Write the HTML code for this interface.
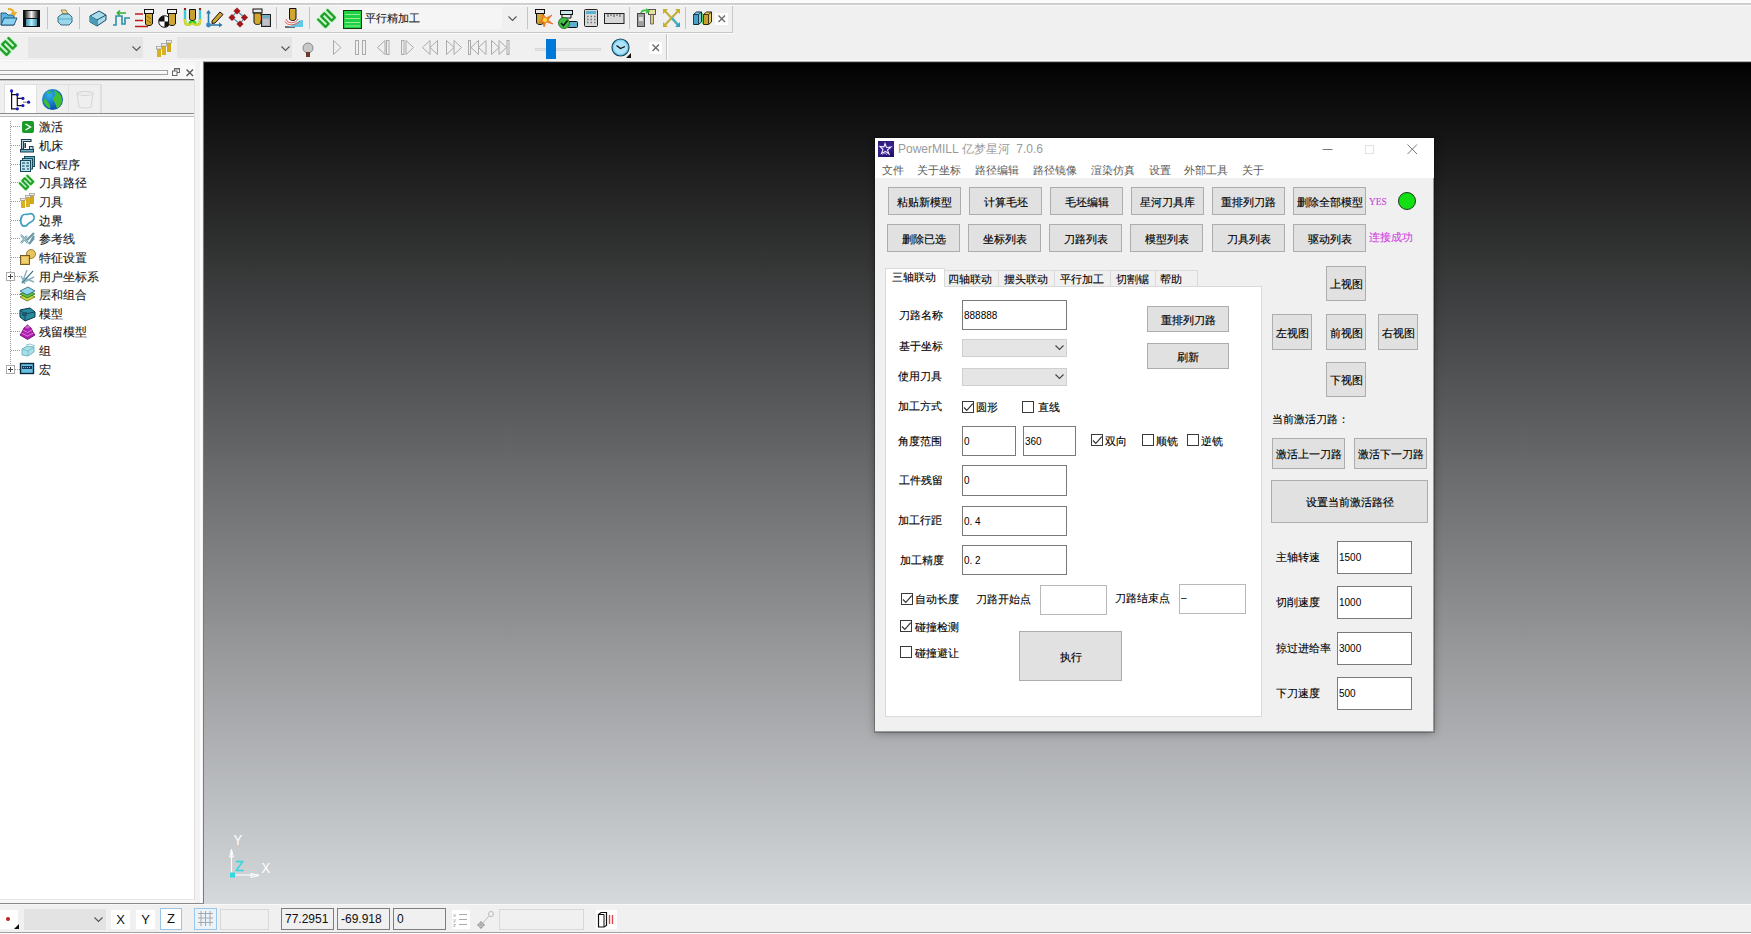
<!DOCTYPE html>
<html><head><meta charset="utf-8">
<style>
*{box-sizing:border-box}
html,body{margin:0;padding:0}
body{width:1751px;height:934px;position:relative;overflow:hidden;background:#f0f0f0;font-family:"Liberation Sans",sans-serif;font-size:12px;color:#000}
.a{position:absolute}
.sep{position:absolute;width:1px;background:#c4c4c4}
.btn{position:absolute;background:#e1e1e1;border:1px solid #adadad;text-align:center;font-size:11.2px;color:#000;display:flex;align-items:center;justify-content:center;white-space:nowrap;padding-top:2px;-webkit-text-stroke:0.15px #000}
.tb{position:absolute;background:#fff;border:1px solid #7a7a7a;font-size:10px;padding-left:1px;display:flex;align-items:center}
.lbl{position:absolute;font-size:11.2px;white-space:nowrap;line-height:14px;-webkit-text-stroke:0.12px currentColor}
.cb{position:absolute;width:12px;height:12px;border:1px solid #3a3a3a;background:#fff}
.cmb{position:absolute;background:#e5e5e5;border:1px solid #cfcfcf}
svg{position:absolute;overflow:visible}
</style></head><body>

<!-- top strip -->
<div class="a" style="left:0;top:0;width:1751px;height:3px;background:#fbfbfb"></div>
<div class="a" style="left:0;top:3px;width:1751px;height:2px;background:#cfcfcf"></div>
<div class="a" style="left:0;top:32px;width:733px;height:1px;background:#c8c8c8"></div>
<div class="a" style="left:0;top:33px;width:734px;height:1px;background:#fafafa"></div><div class="a" style="left:0;top:5px;width:1751px;height:1px;background:#fbfbfb"></div>
<div class="a" style="left:732px;top:6px;width:1px;height:27px;background:#c8c8c8"></div>
<div class="a" style="left:666px;top:34px;width:1px;height:27px;background:#c4c4c4"></div><div class="a" style="left:667px;top:34px;width:1px;height:27px;background:#fdfdfd"></div>
<div class="a" style="left:0;top:60px;width:1751px;height:1px;background:#fafafa"></div><div class="a" style="left:203px;top:61px;width:1548px;height:1px;background:#b0b0b0"></div>


<!-- toolbar row 1 -->
<div class="sep" style="left:47px;top:7px;height:22px"></div>
<div class="sep" style="left:79px;top:7px;height:22px"></div>
<div class="sep" style="left:276px;top:7px;height:22px"></div>
<div class="sep" style="left:309px;top:7px;height:22px"></div>
<div class="sep" style="left:527px;top:7px;height:22px"></div>
<div class="sep" style="left:629px;top:7px;height:22px"></div>
<div class="sep" style="left:685px;top:7px;height:22px"></div>
<!-- open -->
<svg style="left:0px;top:8px" width="18" height="19"><path d="M1 5 H6 L8 7 H14 V17 H1Z" fill="#5ab4e0" stroke="#1a4a70" stroke-width="0.9"/><path d="M1 17 L4 10 H17 L14 17Z" fill="#8ad0f0" stroke="#1a4a70" stroke-width="0.9"/><path d="M8 1 C12 1 14 3 14 6 M11.5 4.5 L14 7 L16.5 4" fill="none" stroke="#e8b020" stroke-width="1.8"/></svg>
<!-- save -->
<svg style="left:23px;top:10px" width="17" height="17"><defs><linearGradient id="sg1" x1="0" x2="1"><stop offset="0" stop-color="#222"/><stop offset="0.5" stop-color="#f4f4f4"/><stop offset="1" stop-color="#222"/></linearGradient><linearGradient id="sg2" x1="0" x2="1"><stop offset="0" stop-color="#3a90b0"/><stop offset="0.5" stop-color="#b8ecfa"/><stop offset="1" stop-color="#3a90b0"/></linearGradient></defs><rect x="0" y="0" width="17" height="17" fill="#111"/><rect x="2" y="1" width="13" height="7" fill="url(#sg1)"/><rect x="3" y="9" width="11" height="7" fill="url(#sg2)"/></svg>
<!-- print -->
<svg style="left:56px;top:9px" width="18" height="18"><path d="M5 1 H10 L12 5 H7Z" fill="#e8d890" stroke="#7a6a30" stroke-width="0.7"/><path d="M2 8 L6 5 H13 L16 8 V13 L13 16 H5 L2 13Z" fill="#9ad8ec" stroke="#2a5a70" stroke-width="0.9"/><path d="M3 10 H15" stroke="#5aa8c8"/></svg>
<!-- box -->
<svg style="left:89px;top:10px" width="18" height="17"><path d="M1 6 L10 1 L17 5 L17 10 L8 16 L1 12Z" fill="#a8dcec" stroke="#1a4a60" stroke-width="1"/><path d="M1 6 L8 10 L17 5 M8 10 V16" fill="none" stroke="#1a4a60" stroke-width="1"/><path d="M1 6 L8 10 V16 L1 12Z" fill="#4a9ab8"/></svg>
<!-- step path -->
<svg style="left:112px;top:9px" width="19" height="17"><path d="M1 16 H4 V7 H10 V15 H13 V9 H18" fill="none" stroke="#2a90b0" stroke-width="1.6"/><path d="M5 4 H14 M5 4 L8 1.5 M5 4 L8 6.5" fill="none" stroke="#30b030" stroke-width="1.6"/></svg>
<!-- red lines + tool -->
<svg style="left:135px;top:8px" width="20" height="20"><path d="M0 6 H8 M0 12.5 H8 M0 18.5 H13" stroke="#c01818" stroke-width="1.5"/><rect x="9.5" y="1.5" width="9" height="4" fill="#f0f0f0" stroke="#111" stroke-width="1"/><path d="M10.5 5.5 H17.5 V15 C17.5 17 15.5 17.5 14 17.5 C12 17.5 10.5 17 10.5 15Z" fill="#d0a830" stroke="#111" stroke-width="1"/><path d="M12 8 L16 11 M12 12 L16 15" stroke="#8a6a10"/></svg>
<!-- disc + tool -->
<svg style="left:158px;top:8px" width="20" height="20"><circle cx="6.5" cy="13.5" r="5.8" fill="#fff" stroke="#111" stroke-width="1"/><path d="M6.5 13.5 V7.7 A5.8 5.8 0 0 0 0.7 13.5Z M6.5 13.5 V19.3 A5.8 5.8 0 0 0 12.3 13.5Z" fill="#111"/><rect x="9.5" y="1.5" width="9" height="4" fill="#f0f0f0" stroke="#111" stroke-width="1"/><path d="M10.5 5.5 H17.5 V15 C17.5 17 15.5 17.5 14 17.5 C12 17.5 10.5 17 10.5 15Z" fill="#d0a830" stroke="#111" stroke-width="1"/></svg>
<!-- U tool -->
<svg style="left:183px;top:8px" width="19" height="20"><path d="M2 1 V13 C2 17 5 18 9.5 15 C14 18 17 17 17 13 V1" fill="none" stroke="#40c8d8" stroke-width="2.4"/><path d="M2 11 V13 C2 17 5 18 9.5 15 C14 18 17 17 17 13 V11" fill="none" stroke="#d8d820" stroke-width="2.4"/><path d="M6 15 L9.5 12.5 L13 15" fill="none" stroke="#30d030" stroke-width="2.4"/><path d="M6.5 1.5 H12.5 V10 C12.5 12 11 12.5 9.5 12.5 C8 12.5 6.5 12 6.5 10Z" fill="#c8a030" stroke="#111" stroke-width="1"/><rect x="1" y="0" width="2" height="2" fill="#a01818"/><rect x="16" y="0" width="2" height="2" fill="#a01818"/></svg>
<!-- axis pencil -->
<svg style="left:205px;top:8px" width="20" height="20"><path d="M3.5 17 V3 M3.5 17 H16" stroke="#2a7aa8" stroke-width="1.6"/><path d="M1 5.5 L3.5 2 L6 5.5Z M14 14.5 L17.5 17 L14 19.5Z" fill="#2a7aa8"/><circle cx="3.5" cy="17" r="2.4" fill="#3a8ab8"/><path d="M7 13 L15 4 L18 6.5 L10 15 L7 15.5Z" fill="#d0a830" stroke="#111" stroke-width="1"/></svg>
<!-- diamond -->
<svg style="left:229px;top:8px" width="19" height="19"><path d="M8 3 L15.5 9.5 L11 16 L3 9.5Z" fill="none" stroke="#4a90b0" stroke-width="1.2"/><rect x="5.5" y="0.5" width="5" height="5" transform="rotate(45 8 3)" fill="#a01818"/><rect x="13" y="7" width="5" height="5" transform="rotate(45 15.5 9.5)" fill="#a01818"/><rect x="8.5" y="13.5" width="5" height="5" transform="rotate(45 11 16)" fill="#a01818"/><rect x="0.5" y="7" width="5" height="5" transform="rotate(45 3 9.5)" fill="#a01818"/></svg>
<!-- tool + bin -->
<svg style="left:252px;top:8px" width="20" height="20"><rect x="1" y="1" width="9" height="4" fill="#e8e8e8" stroke="#111" stroke-width="1"/><path d="M2 5 H9 V14 C9 16 7 16.5 5.5 16.5 C4 16.5 2 16 2 14Z" fill="#d0a830" stroke="#111" stroke-width="1"/><path d="M8 7 L11 9 L8 13Z" fill="#f08020"/><rect x="9.5" y="6.5" width="9" height="12" fill="#a0a8b0" stroke="#222" stroke-width="1"/><rect x="10.5" y="7.5" width="7" height="2" fill="#5ab0d0"/><path d="M12 11 V17 M14 11 V17 M16 11 V17" stroke="#ddd"/></svg>
<!-- tool red arc -->
<svg style="left:284px;top:8px" width="20" height="20"><path d="M1 19 H11" stroke="#111" stroke-width="1.2"/><path d="M1 19 C10 19 13 12 19 12 V19Z" fill="#60c8e0"/><path d="M2 11 C3 16 12 16 14 11 M1 13.5 C3 18 12 18 16 13" fill="none" stroke="#e06060" stroke-width="1"/><path d="M5.5 0.5 H12 V10 C12 12 10.5 12.5 8.75 12.5 C7 12.5 5.5 12 5.5 10Z" fill="#d0a830" stroke="#111" stroke-width="1"/></svg>
<!-- green zigzag -->
<svg style="left:312px;top:4px" width="30" height="28"><g transform="translate(14.5,14.5) rotate(45)"><path d="M-5.2 6.6 H5.2 V2.2 H-5.2 V-2.2 H5.2 V-6.6 H-5.2" fill="none" stroke="#c8f4c8" stroke-width="4.2" stroke-linejoin="round" stroke-linecap="round"/><path d="M-5.2 6.6 H5.2 V2.2 H-5.2 V-2.2 H5.2 V-6.6 H-5.2" fill="none" stroke="#1ea02a" stroke-width="2.3" stroke-linejoin="round" stroke-linecap="round"/></g></svg>
<!-- combo -->
<div class="a" style="left:340px;top:7px;width:162px;height:22px;background:#f5f5f5"></div>
<svg style="left:343px;top:10px" width="19" height="19"><rect x="0.5" y="0.5" width="18" height="18" fill="#20d040" stroke="#103a10" stroke-width="1"/><path d="M2 4.5 H17 M2 8.5 H17 M2 12.5 H17 M2 16 H17" stroke="#90f0a0" stroke-width="1"/></svg>
<div class="lbl" style="left:365px;top:11px;font-size:11px;color:#222">平行精加工</div>
<svg style="left:508px;top:16px" width="10" height="6"><path d="M0.5 0.5 L4.5 4.5 L8.5 0.5" fill="none" stroke="#555" stroke-width="1.1"/></svg>
<!-- explosion tool -->
<svg style="left:534px;top:8px" width="20" height="20"><rect x="1.5" y="1.5" width="9" height="4" fill="#e8e8e8" stroke="#111" stroke-width="1"/><path d="M2.5 5.5 H9.5 V14 C9.5 16 8 16.5 6 16.5 C4 16.5 2.5 16 2.5 14Z" fill="#d0a830" stroke="#111" stroke-width="1"/><path d="M9 6 L12 10 L18 7 L14 12 L19 16 L12 14 L10 19 L9 14 L5 15 L8 11Z" fill="#f09020" stroke="#e05010" stroke-width="0.6"/><circle cx="11" cy="12" r="2" fill="#ffe040"/></svg>
<!-- check tool -->
<svg style="left:558px;top:9px" width="20" height="20"><rect x="2.5" y="1.5" width="12" height="4" fill="#c8e4ec" stroke="#111" stroke-width="1"/><path d="M4 5.5 H13 V9 H4Z" fill="#eee" stroke="#111" stroke-width="1"/><rect x="9.5" y="12.5" width="10" height="6" rx="1" fill="#5ab0d0" stroke="#111" stroke-width="1"/><circle cx="6" cy="14" r="5.5" fill="#40c040" stroke="#1a5a1a" stroke-width="0.8"/><path d="M3 14 L5.5 16.5 L9.5 11.5" fill="none" stroke="#111" stroke-width="1.6"/></svg>
<!-- calculator -->
<svg style="left:584px;top:9px" width="14" height="18"><rect x="0.5" y="0.5" width="13" height="17" rx="1" fill="#d8d8d8" stroke="#222" stroke-width="1"/><rect x="2" y="2" width="10" height="3" fill="#5ab0d0"/><path d="M3 7.5 H4.5 M6.5 7.5 H8 M10 7.5 H11.5 M3 10.5 H4.5 M6.5 10.5 H8 M10 10.5 H11.5 M3 13.5 H4.5 M6.5 13.5 H8 M10 13.5 H11.5" stroke="#777" stroke-width="1.6"/></svg>
<!-- ruler -->
<svg style="left:604px;top:13px" width="21" height="12"><rect x="0.5" y="0.5" width="19.5" height="10" fill="#d8d8d8" stroke="#222" stroke-width="1"/><path d="M4 1 V4 M7 1 V3 M10 1 V4 M13 1 V3 M16 1 V4" stroke="#555"/></svg>
<!-- tools w arrow -->
<svg style="left:637px;top:8px" width="20" height="20"><rect x="0.5" y="5.5" width="7" height="13" fill="#a0a0a0" stroke="#444" stroke-width="1"/><rect x="2" y="9" width="4" height="4" fill="#ddd"/><rect x="11.5" y="1.5" width="7" height="5" fill="#e8e0a0" stroke="#555" stroke-width="1"/><path d="M13.5 6.5 H16.5 V16 H13.5Z" fill="#d8c880" stroke="#555" stroke-width="0.8"/><path d="M4 5 C5 2 8 2 11 3 M9 1 L12 3 L9 5" fill="none" stroke="#40c040" stroke-width="1.6"/></svg>
<!-- cross arrows -->
<svg style="left:662px;top:8px" width="19" height="20"><path d="M2 2 L17 18 M17 2 L2 18" stroke="#c0b040" stroke-width="2.2"/><path d="M10 10 L17 18" stroke="#40b0d0" stroke-width="2.2"/><path d="M1 1 H6 L1 6Z M18 1 H13 L18 6Z M1 19 H6 L1 14Z" fill="#c8b020"/><path d="M18 19 H13 L18 14Z" fill="#30a0c8"/></svg>
<!-- boxes -->
<svg style="left:693px;top:11px" width="20" height="15"><path d="M0.5 3.5 L3.5 1 H8.5 V11 L5.5 13.5 H0.5Z" fill="#7cc8e8" stroke="#10303a" stroke-width="1"/><path d="M0.5 3.5 H5.5 V13.5 M5.5 3.5 L8.5 1" fill="none" stroke="#10303a" stroke-width="0.9"/><path d="M0.8 4 H5 V13 H0.8Z" fill="#4aa0c8"/><path d="M10.5 3.5 L13.5 1 H18.5 V11 L15.5 13.5 H10.5Z" fill="#e8c850" stroke="#302810" stroke-width="1"/><path d="M10.5 3.5 H15.5 V13.5 M15.5 3.5 L18.5 1" fill="none" stroke="#302810" stroke-width="0.9"/><path d="M10.8 4 H15 V13 H10.8Z" fill="#c8a030"/><path d="M9.5 2 V13" stroke="#40c040" stroke-width="0.8"/></svg>
<div class="a" style="left:715px;top:13px;width:13px;height:12px;background:#fff"></div>
<svg style="left:718px;top:15px" width="8" height="8"><path d="M0.5 0.5 L7 7 M7 0.5 L0.5 7" stroke="#6a6a6a" stroke-width="1.4"/></svg>

<!-- toolbar row 2 -->
<svg style="left:0px;top:33px" width="22" height="26"><g transform="translate(7.5,13.5) rotate(45)"><path d="M-5.2 6.6 H5.2 V2.2 H-5.2 V-2.2 H5.2 V-6.6 H-5.2" fill="none" stroke="#c8f4c8" stroke-width="4.2" stroke-linejoin="round" stroke-linecap="round"/><path d="M-5.2 6.6 H5.2 V2.2 H-5.2 V-2.2 H5.2 V-6.6 H-5.2" fill="none" stroke="#1ea02a" stroke-width="2.3" stroke-linejoin="round" stroke-linecap="round"/></g></svg>
<div class="cmb" style="left:28px;top:37px;width:115px;height:21px;border:none"></div>
<svg style="left:132px;top:46px" width="10" height="6"><path d="M0.5 0.5 L4.5 4.5 L8.5 0.5" fill="none" stroke="#555" stroke-width="1.1"/></svg>
<svg style="left:155px;top:39px" width="19" height="19"><rect x="2" y="10" width="4" height="8" fill="#d8b020"/><rect x="7" y="7" width="4" height="9" fill="#d8b020"/><rect x="12" y="4" width="4" height="9" fill="#d0a818"/><rect x="1.5" y="7.5" width="5" height="2.5" fill="#f0f0f0" stroke="#888" stroke-width="0.6"/><rect x="6.5" y="4.5" width="5" height="2.5" fill="#f0f0f0" stroke="#888" stroke-width="0.6"/><rect x="11.5" y="1.5" width="5" height="2.5" fill="#f0f0f0" stroke="#888" stroke-width="0.6"/></svg>
<div class="cmb" style="left:177px;top:37px;width:115px;height:21px;border:none"></div>
<svg style="left:281px;top:46px" width="10" height="6"><path d="M0.5 0.5 L4.5 4.5 L8.5 0.5" fill="none" stroke="#555" stroke-width="1.1"/></svg>
<svg style="left:302px;top:42px" width="12" height="16"><circle cx="6" cy="6" r="5" fill="#c8c8c8" stroke="#777" stroke-width="0.8"/><rect x="4" y="10" width="4" height="5" fill="#6a3a2a"/></svg>
<svg style="left:333px;top:40px" width="9" height="15"><path d="M0.5 0.5 L8 7.5 L0.5 14.5Z" fill="none" stroke="#aaa" stroke-width="1"/></svg>
<svg style="left:355px;top:40px" width="12" height="15"><rect x="0.5" y="0.5" width="3" height="14" fill="none" stroke="#aaa"/><rect x="7.5" y="0.5" width="3" height="14" fill="none" stroke="#aaa"/></svg>
<svg style="left:377px;top:40px" width="13" height="15"><path d="M8 0.5 L0.5 7.5 L8 14.5Z" fill="none" stroke="#aaa"/><rect x="9.5" y="0.5" width="2.5" height="14" fill="none" stroke="#aaa"/></svg>
<svg style="left:401px;top:40px" width="14" height="15"><rect x="0.5" y="0.5" width="2.5" height="14" fill="none" stroke="#aaa"/><path d="M5 0.5 L12.5 7.5 L5 14.5Z" fill="none" stroke="#aaa"/></svg>
<svg style="left:422px;top:40px" width="17" height="15"><path d="M8 0.5 L0.5 7.5 L8 14.5Z M15.5 0.5 L8 7.5 L15.5 14.5Z" fill="none" stroke="#aaa"/></svg>
<svg style="left:446px;top:40px" width="17" height="15"><path d="M0.5 0.5 L8 7.5 L0.5 14.5Z M8 0.5 L15.5 7.5 L8 14.5Z" fill="none" stroke="#aaa"/></svg>
<svg style="left:468px;top:40px" width="19" height="15"><rect x="0.5" y="0.5" width="2" height="14" fill="none" stroke="#aaa"/><path d="M10.5 0.5 L3 7.5 L10.5 14.5Z M18 0.5 L10.5 7.5 L18 14.5Z" fill="none" stroke="#aaa"/></svg>
<svg style="left:491px;top:40px" width="19" height="15"><path d="M0.5 0.5 L8 7.5 L0.5 14.5Z M8 0.5 L15.5 7.5 L8 14.5Z" fill="none" stroke="#aaa"/><rect x="16" y="0.5" width="2" height="14" fill="none" stroke="#aaa"/></svg>
<div class="a" style="left:535px;top:48px;width:66px;height:3px;background:#e4e4e4;border:1px solid #d8d8d8"></div>
<div class="a" style="left:546px;top:39px;width:10px;height:20px;background:#0078d7"></div>
<svg style="left:611px;top:38px" width="21" height="21"><circle cx="9.5" cy="9.5" r="8.5" fill="#7ad0f0" stroke="#1a4a60" stroke-width="1.2"/><circle cx="9.5" cy="9.5" r="6.5" fill="#b0e4f8"/><path d="M5.5 7.5 L9.5 10.5 L14 8.5" fill="none" stroke="#111" stroke-width="1.3"/><path d="M15 20 L20 15 V20Z" fill="#111"/></svg>
<div class="a" style="left:649px;top:42px;width:13px;height:12px;background:#fff"></div>
<svg style="left:652px;top:44px" width="8" height="8"><path d="M0.5 0.5 L7 7 M7 0.5 L0.5 7" stroke="#6a6a6a" stroke-width="1.4"/></svg>

<!-- viewport -->
<div class="a" style="left:203px;top:62px;width:1548px;height:842px;background:linear-gradient(#3a3a3a 0px,#000 1px,#050505 12px,#d6d9dc 842px)"></div>
<div class="a" style="left:203px;top:62px;width:1px;height:842px;background:#7a7a7a"></div>

<!-- left panel -->
<div class="a" style="left:0;top:62px;width:203px;height:842px;background:#f7f7f7"></div>
<div class="a" style="left:195px;top:62px;width:8px;height:842px;background:#f2f2f2"></div><div class="a" style="left:200px;top:62px;width:2px;height:842px;background:#fbfbfb"></div>
<div class="a" style="left:0;top:70px;width:168px;height:1px;background:#a0a0a0"></div><div class="a" style="left:0;top:71px;width:168px;height:1px;background:#fdfdfd"></div>
<div class="a" style="left:0;top:74px;width:168px;height:1px;background:#a0a0a0"></div><div class="a" style="left:167px;top:70px;width:1px;height:5px;background:#a0a0a0"></div>
<div class="a" style="left:0;top:79px;width:195px;height:1px;background:#6e6e6e"></div><div class="a" style="left:0;top:80px;width:195px;height:1px;background:#c8c8c8"></div>
<div class="a" style="left:0;top:81px;width:195px;height:32px;background:#efefef"></div>
<div class="a" style="left:0;top:113px;width:195px;height:1px;background:#8a8a8a"></div>
<div class="a" style="left:0;top:114px;width:195px;height:2px;background:#f4f4f4"></div>
<div class="a" style="left:0;top:116px;width:195px;height:1px;background:#bdbdbd"></div>
<div class="a" style="left:0;top:117px;width:194px;height:783px;background:#fff;border-bottom:1px solid #e6e6e6"></div>
<div class="a" style="left:194px;top:79px;width:1px;height:821px;background:#e0e0e0"></div>


<!-- left panel header buttons -->
<div class="a" style="left:170px;top:66px;width:11px;height:11px;background:#fafafa"></div>
<svg style="left:172px;top:68px" width="8" height="8"><rect x="2.5" y="0.5" width="5" height="4" fill="none" stroke="#666"/><rect x="2.5" y="0" width="5" height="1.5" fill="#666"/><rect x="0.5" y="3" width="4.5" height="4.5" fill="#fafafa" stroke="#666"/></svg>
<div class="a" style="left:183px;top:66px;width:12px;height:12px;background:#fafafa"></div>
<svg style="left:186px;top:69px" width="8" height="8"><path d="M0.5 0.5 L7 7 M7 0.5 L0.5 7" stroke="#555" stroke-width="1.4"/></svg>
<!-- tabs -->
<div class="a" style="left:4px;top:84px;width:98px;height:29px;border:1px solid #dedede;border-bottom:none"></div><div class="a" style="left:5px;top:85px;width:31px;height:28px;background:#fdfdfd"></div>
<div class="a" style="left:36px;top:85px;width:1px;height:28px;background:#e0e0e0"></div>
<div class="a" style="left:68px;top:85px;width:1px;height:28px;background:#e0e0e0"></div>
<div class="a" style="left:100px;top:85px;width:1px;height:28px;background:#e0e0e0"></div>
<svg style="left:0px;top:78px" width="36" height="36"><path d="M11.6 13 V30.8 H17.3 M11.6 16.6 H17.3 V27.6 H22.9 M17.3 20.4 H22.9" fill="none" stroke="#111" stroke-width="1.2"/><path d="M22.9 24.2 H28.6" stroke="#777" stroke-width="1"/><circle cx="11.6" cy="12.9" r="1.6" fill="#1a1ab8"/><circle cx="17.3" cy="16.6" r="1.6" fill="#1a1ab8"/><circle cx="22.9" cy="20.4" r="1.6" fill="#1a1ab8"/><circle cx="28.6" cy="24.2" r="1.6" fill="#1a1ab8"/><circle cx="22.9" cy="27.6" r="1.6" fill="#1a1ab8"/><circle cx="17.3" cy="30.8" r="1.6" fill="#1a1ab8"/></svg>
<div class="a" style="left:42px;top:89px;width:21px;height:21px;border-radius:50%;background:radial-gradient(circle at 35% 30%,#30b0e8,#0a5ab8 65%,#083a88)"></div><svg style="left:42px;top:89px" width="21" height="21"><path d="M12 1.5 C16 2 20 6 20 11 C20 15 18 18 15 19.5 C14 17 13 14 12 12 C10 11 11 8 13 7 C14 5 12 3 12 1.5Z" fill="#40c030"/><path d="M2 9 C3 11 5 11 6 13 C7 15 9 16 8 19.5 C5 18.5 2 15 1.5 11Z" fill="#40c030"/><path d="M4 3.5 C6 2 8 2 9 3 C8 5 6 5 4 3.5Z" fill="#40c030"/></svg>
<svg style="left:75px;top:90px" width="20" height="20"><path d="M2 3 Q10 0 18 3 L16 17 Q10 19 4 17Z" fill="none" stroke="#d8d8d8" stroke-width="1.2"/><ellipse cx="10" cy="3.5" rx="8" ry="2" fill="none" stroke="#d8d8d8"/></svg>
<!-- tree lines -->
<div class="a" style="left:10px;top:121px;width:0;height:249px;border-left:1px dotted #999"></div>
<div class="a" style="left:11px;top:126px;width:9px;height:0;border-top:1px dotted #999"></div>
<div class="lbl" style="left:39px;top:120px;color:#1a1a1a;font-size:11.5px">激活</div>
<div class="a" style="left:11px;top:145px;width:9px;height:0;border-top:1px dotted #999"></div>
<div class="lbl" style="left:39px;top:139px;color:#1a1a1a;font-size:11.5px">机床</div>
<div class="a" style="left:11px;top:164px;width:9px;height:0;border-top:1px dotted #999"></div>
<div class="lbl" style="left:39px;top:158px;color:#1a1a1a;font-size:11.5px">NC程序</div>
<div class="a" style="left:11px;top:182px;width:9px;height:0;border-top:1px dotted #999"></div>
<div class="lbl" style="left:39px;top:176px;color:#1a1a1a;font-size:11.5px">刀具路径</div>
<div class="a" style="left:11px;top:201px;width:9px;height:0;border-top:1px dotted #999"></div>
<div class="lbl" style="left:39px;top:195px;color:#1a1a1a;font-size:11.5px">刀具</div>
<div class="a" style="left:11px;top:220px;width:9px;height:0;border-top:1px dotted #999"></div>
<div class="lbl" style="left:39px;top:214px;color:#1a1a1a;font-size:11.5px">边界</div>
<div class="a" style="left:11px;top:238px;width:9px;height:0;border-top:1px dotted #999"></div>
<div class="lbl" style="left:39px;top:232px;color:#1a1a1a;font-size:11.5px">参考线</div>
<div class="a" style="left:11px;top:257px;width:9px;height:0;border-top:1px dotted #999"></div>
<div class="lbl" style="left:39px;top:251px;color:#1a1a1a;font-size:11.5px">特征设置</div>
<div class="a" style="left:11px;top:276px;width:9px;height:0;border-top:1px dotted #999"></div>
<div class="lbl" style="left:39px;top:270px;color:#1a1a1a;font-size:11.5px">用户坐标系</div>
<div class="a" style="left:11px;top:294px;width:9px;height:0;border-top:1px dotted #999"></div>
<div class="lbl" style="left:39px;top:288px;color:#1a1a1a;font-size:11.5px">层和组合</div>
<div class="a" style="left:11px;top:313px;width:9px;height:0;border-top:1px dotted #999"></div>
<div class="lbl" style="left:39px;top:307px;color:#1a1a1a;font-size:11.5px">模型</div>
<div class="a" style="left:11px;top:331px;width:9px;height:0;border-top:1px dotted #999"></div>
<div class="lbl" style="left:39px;top:325px;color:#1a1a1a;font-size:11.5px">残留模型</div>
<div class="a" style="left:11px;top:350px;width:9px;height:0;border-top:1px dotted #999"></div>
<div class="lbl" style="left:39px;top:344px;color:#1a1a1a;font-size:11.5px">组</div>
<div class="a" style="left:11px;top:369px;width:9px;height:0;border-top:1px dotted #999"></div>
<div class="lbl" style="left:39px;top:363px;color:#1a1a1a;font-size:11.5px">宏</div>
<div class="a" style="left:6px;top:272px;width:9px;height:9px;background:#fff;border:1px solid #aaa"></div>
<div class="a" style="left:8px;top:276px;width:5px;height:1px;background:#444"></div><div class="a" style="left:10px;top:274px;width:1px;height:5px;background:#444"></div>
<div class="a" style="left:6px;top:365px;width:9px;height:9px;background:#fff;border:1px solid #aaa"></div>
<div class="a" style="left:8px;top:369px;width:5px;height:1px;background:#444"></div><div class="a" style="left:10px;top:367px;width:1px;height:5px;background:#444"></div>


<!-- tree icons -->
<svg style="left:21px;top:120px" width="14" height="14"><rect x="1" y="1" width="12" height="12" rx="2" fill="#1a9a2a"/><path d="M4.5 4 L9.5 7 L4.5 10" fill="none" stroke="#fff" stroke-width="1.4"/></svg>
<svg style="left:20px;top:138px" width="15" height="15"><path d="M1.5 1.5 H11 V3.5 H3.5 V11 H1.5Z" fill="#bfe0ea" stroke="#1e3a48" stroke-width="1.1"/><rect x="4.5" y="5" width="1.5" height="5" fill="#1e3a48"/><rect x="9.5" y="8.5" width="3.5" height="3" fill="#bfe0ea" stroke="#1e3a48" stroke-width="1"/><rect x="0.5" y="11.5" width="13" height="2.5" fill="#6ab8d0" stroke="#1e3a48" stroke-width="1"/></svg>
<svg style="left:19px;top:155px" width="17" height="18"><rect x="5.5" y="1.5" width="10" height="10" fill="#6ab8d0" stroke="#1a4a5a" stroke-width="1"/><rect x="3.5" y="3.5" width="10" height="10.5" fill="#8ccfe2" stroke="#1a4a5a" stroke-width="1"/><rect x="1.5" y="5.5" width="10" height="11" fill="#b8e8f4" stroke="#1a4a5a" stroke-width="1"/><path d="M3 8 H6 M7.5 8 H10 M3 11 H5.5 M7 11 H10 M3 14 H6 M8 14 H10" stroke="#103040" stroke-width="1.2"/></svg>
<svg style="left:16px;top:172px" width="22" height="22"><g transform="translate(10.5,10.5) rotate(45) scale(0.8)"><path d="M-5.2 6.6 H5.2 V2.2 H-5.2 V-2.2 H5.2 V-6.6 H-5.2" fill="none" stroke="#c8f4c8" stroke-width="4.4" stroke-linejoin="round" stroke-linecap="round"/><path d="M-5.2 6.6 H5.2 V2.2 H-5.2 V-2.2 H5.2 V-6.6 H-5.2" fill="none" stroke="#1ea02a" stroke-width="2.5" stroke-linejoin="round" stroke-linecap="round"/></g></svg>
<svg style="left:19px;top:193px" width="17" height="16"><rect x="2" y="7" width="4" height="8" fill="#d8b020"/><rect x="7" y="4" width="4" height="10" fill="#d8b020"/><rect x="11" y="1" width="4" height="10" fill="#d0a818"/><rect x="1.5" y="5.5" width="5" height="2" fill="#eee" stroke="#888" stroke-width="0.6"/><rect x="6.5" y="2.5" width="5" height="2" fill="#eee" stroke="#888" stroke-width="0.6"/><rect x="10.5" y="0.5" width="5" height="2" fill="#eee" stroke="#888" stroke-width="0.6"/></svg>
<svg style="left:19px;top:212px" width="17" height="17"><path d="M3 4 C5 1 8 3 10 2 C13 1 16 3 15 7 C14 10 11 10 9 12 C7 15 3 15 2 11 C1 8 2 6 3 4Z" fill="#fff" stroke="#3aa0c0" stroke-width="1.7"/></svg>
<svg style="left:19px;top:231px" width="17" height="16"><path d="M2 4 L9 12 M2 12 L8 5 M8 9 L15 2 M10 13 L15 7 M12 10 L15 5" stroke="#6a9aa8" stroke-width="2.2"/><path d="M2 4 L9 12 M2 12 L8 5" stroke="#d0e4ea" stroke-width="0.8"/></svg>
<svg style="left:19px;top:248px" width="17" height="18"><circle cx="12" cy="6" r="4.5" fill="#e8c460" stroke="#8a6a20" stroke-width="0.8"/><rect x="1.5" y="7.5" width="9" height="9" fill="#e0b850" stroke="#6a5018" stroke-width="0.9"/><rect x="3" y="9" width="6" height="6" fill="#f0d070"/></svg>
<svg style="left:19px;top:268px" width="17" height="17"><path d="M3 15 L14 3 M3 15 L15 9 M3 15 L8 2 M5 10 L15 14 M2 8 L6 16" stroke="#8ab0c0" stroke-width="1.4"/><path d="M3 15 L14 3" stroke="#3a6a80" stroke-width="1"/></svg>
<svg style="left:19px;top:286px" width="17" height="16"><path d="M1 11 L8 15 L16 11 L9 7Z" fill="#d8d840" stroke="#5a6a20" stroke-width="0.8"/><path d="M1 8 L8 12 L16 8 L9 4Z" fill="#60c040" stroke="#2a6a20" stroke-width="0.8"/><path d="M1 5 L8 9 L16 5 L9 1Z" fill="#90d8f0" stroke="#2a5a70" stroke-width="0.8"/></svg>
<svg style="left:19px;top:306px" width="17" height="16"><path d="M1 4 L11 2 L16 6 L16 11 L6 15 L1 11Z" fill="#2a8aa0" stroke="#0a3a4a" stroke-width="1"/><path d="M1 4 L6 8 L16 6 M6 8 V15" fill="none" stroke="#0a3a4a" stroke-width="0.8"/><rect x="3" y="6" width="5" height="4" fill="#1a5a70"/></svg>
<svg style="left:19px;top:324px" width="17" height="17"><path d="M8.5 1 L12 4 L14 8 L16 11 L8.5 15.5 L1 11 L3 8 L5 4Z" fill="#b020b0" stroke="#600060" stroke-width="0.8"/><path d="M4 6 L8.5 8.5 L13 6 M2.5 9 L8.5 12 L14.5 9" fill="none" stroke="#e070e0" stroke-width="1"/><ellipse cx="8.5" cy="3" rx="2.5" ry="1.5" fill="#d060d0"/></svg>
<svg style="left:20px;top:343px" width="16" height="15"><path d="M2 6 L7 3 L14 4 L14 9 L8 13 L2 12Z" fill="#a8e0e8" stroke="#60a8b8" stroke-width="0.8"/><path d="M2 6 L8 8 L14 4 M8 8 V13" fill="none" stroke="#70b8c8" stroke-width="0.8"/><path d="M6 2 L10 1 L15 3" fill="none" stroke="#8ac8d8"/></svg>
<svg style="left:19px;top:362px" width="16" height="13"><rect x="1.5" y="1.5" width="13" height="10" fill="#6ac0e0" stroke="#0a2a40" stroke-width="1.4"/><rect x="3" y="4" width="10" height="3" fill="#1a3a60"/><path d="M4 5.5 H12" stroke="#9ad8f0" stroke-width="0.8" stroke-dasharray="1 1"/></svg>

<!-- status bar -->
<div class="a" style="left:0;top:904px;width:1751px;height:29px;background:#f0f0f0"></div>
<div class="a" style="left:0;top:932px;width:1751px;height:1px;background:#a0a0a0"></div>
<div class="a" style="left:0;top:933px;width:1751px;height:1px;background:#fff"></div>


<!-- status bar content -->
<div class="a" style="left:0;top:903px;width:204px;height:1px;background:#8a8a8a"></div><div class="a" style="left:0;top:904px;width:1751px;height:1px;background:#f8f8f8"></div>
<div class="a" style="left:0;top:910px;width:18px;height:19px;background:#fff"></div>
<div class="a" style="left:6px;top:917px;width:4px;height:4px;border-radius:50%;background:#c02020"></div>
<svg style="left:14px;top:924px" width="6" height="6"><path d="M5 0 V5 H0Z" fill="#111"/></svg>
<div class="cmb" style="left:24px;top:909px;width:82px;height:21px;border:none;background:#e3e3e3"></div>
<svg style="left:94px;top:917px" width="10" height="6"><path d="M0.5 0.5 L4.5 4.5 L8.5 0.5" fill="none" stroke="#555" stroke-width="1.1"/></svg>
<div class="a" style="left:111px;top:910px;width:19px;height:19px;background:#fff;font-size:13px;text-align:center;line-height:19px;color:#111">X</div>
<div class="a" style="left:136px;top:910px;width:19px;height:19px;background:#fff;font-size:13px;text-align:center;line-height:19px;color:#111">Y</div>
<div class="a" style="left:160px;top:908px;width:22px;height:22px;background:#fff;border:1px solid #9ac6ea;font-size:13px;text-align:center;line-height:19px;color:#111">Z</div>
<div class="a" style="left:194px;top:908px;width:23px;height:22px;background:#eaf2fa;border:1px solid #9ac6ea"></div>
<svg style="left:197px;top:910px" width="17" height="17"><path d="M1 3.5 H16 M1 8 H16 M1 12.5 H16 M4 1 V16 M8.5 1 V16 M13 1 V16" stroke="#a8a8a8" stroke-width="1"/></svg>
<div class="a" style="left:220px;top:909px;width:49px;height:21px;border:1px solid #d8d8d8"></div>
<div class="a" style="left:281px;top:908px;width:53px;height:22px;border:1px solid #7e7e7e;font-size:12px;line-height:20px;padding-left:3px;color:#111">77.2951</div>
<div class="a" style="left:337px;top:908px;width:53px;height:22px;border:1px solid #7e7e7e;font-size:12px;line-height:20px;padding-left:3px;color:#111">-69.918</div>
<div class="a" style="left:393px;top:908px;width:53px;height:22px;border:1px solid #7e7e7e;font-size:12px;line-height:20px;padding-left:3px;color:#111">0</div>
<div class="a" style="left:452px;top:910px;width:18px;height:19px;background:#fff"></div>
<svg style="left:453px;top:911px" width="16" height="17"><text x="0" y="6" font-size="6" fill="#999" font-family="Liberation Sans">x</text><text x="0" y="11" font-size="6" fill="#999" font-family="Liberation Sans">y</text><text x="0" y="16" font-size="6" fill="#999" font-family="Liberation Sans">z</text><path d="M6 3.5 H14 M6 8.5 H14 M6 13.5 H14" stroke="#aaa"/></svg>
<svg style="left:476px;top:910px" width="19" height="20"><circle cx="15" cy="4" r="2.5" fill="none" stroke="#bbb"/><path d="M5 15 L13 6" stroke="#bbb"/><path d="M1 15 H9 M5 11 V19" stroke="#999"/><circle cx="5" cy="15" r="2.5" fill="none" stroke="#999"/></svg>
<div class="a" style="left:499px;top:909px;width:85px;height:21px;border:1px solid #d8d8d8"></div>
<div class="a" style="left:596px;top:910px;width:21px;height:19px;background:#fff"></div>
<svg style="left:597px;top:911px" width="19" height="17"><path d="M1.5 3.5 L4 1.5 H9.5 V14.5 L7 16 H1.5Z" fill="none" stroke="#111" stroke-width="1.2"/><path d="M1.5 3.5 H7 V16" fill="none" stroke="#111" stroke-width="1"/><path d="M12.5 4 V13 M15.5 4 V13" stroke="#d05050" stroke-width="1.4"/></svg>

<!-- axis -->
<div class="a" style="left:233px;top:833px;font-size:14.5px;color:#fff;line-height:14px;transform:scaleX(0.9)">Y</div>
<div class="a" style="left:261px;top:861px;font-size:14.5px;color:#fff;line-height:14px;transform:scaleX(0.9)">X</div>
<div class="a" style="left:235px;top:859px;font-size:14px;color:#30d8e0;line-height:14px;-webkit-text-stroke:0.4px #30d8e0">Z</div>
<svg style="left:226px;top:845px" width="40" height="36"><path d="M5.5 30 V4 M5.5 30 H33" stroke="#fff" stroke-width="1.2"/><path d="M3.5 12 L5.5 5 L7.5 12Z M25 28.5 L33 30.5 L25 32.5Z" fill="none" stroke="#fff" stroke-width="1"/><rect x="4" y="27.5" width="5" height="5" fill="#30d8e0"/></svg>

<!-- dialog -->
<div class="a" style="left:875px;top:138px;width:559px;height:594px;background:#f0f0f0;box-shadow:0 0 0 1px rgba(0,0,0,0.22),0 1px 8px rgba(0,0,0,0.35);border-right:1px solid #9a9a9a;border-bottom:1px solid #9a9a9a;"></div>
<div class="a" style="left:875px;top:138px;width:559px;height:40px;background:#fff"></div>


<!-- dialog content -->
<div class="a" style="left:878px;top:141px;width:16px;height:16px;background:linear-gradient(160deg,#2a1a70,#3a2090 50%,#1a1060);"></div><svg style="left:878px;top:141px" width="16" height="16"><path d="M7 2.5 L8.5 6.5 L13 6 L9.5 9 L11 13 L7.5 10.5 L3.5 12.5 L5 8.5 L2 5.5 L6 5.8Z" fill="none" stroke="#f0e8ff" stroke-width="1.1"/><path d="M4 13.5 L7 12 L9 14" fill="none" stroke="#c0b0ff" stroke-width="0.8"/></svg>
<div class="lbl" style="left:898px;top:142px;color:#9a9a9a;font-size:12px;-webkit-text-stroke:0">PowerMILL 亿梦星河&nbsp; 7.0.6</div>
<svg style="left:1322px;top:149px" width="12" height="2"><rect x="0.5" y="0" width="10" height="1" fill="#777"/></svg>
<svg style="left:1365px;top:145px" width="12" height="12"><rect x="0.5" y="0.5" width="8" height="8" fill="none" stroke="#e0e0e0"/></svg>
<svg style="left:1407px;top:144px" width="12" height="12"><path d="M0.5 0.5 L10 10 M10 0.5 L0.5 10" stroke="#666" stroke-width="0.9"/></svg>

<div class="lbl" style="left:882px;top:163px;color:#5a5a5a;-webkit-text-stroke:0">文件</div>
<div class="lbl" style="left:917px;top:163px;color:#5a5a5a;-webkit-text-stroke:0">关于坐标</div>
<div class="lbl" style="left:975px;top:163px;color:#5a5a5a;-webkit-text-stroke:0">路径编辑</div>
<div class="lbl" style="left:1033px;top:163px;color:#5a5a5a;-webkit-text-stroke:0">路径镜像</div>
<div class="lbl" style="left:1091px;top:163px;color:#5a5a5a;-webkit-text-stroke:0">渲染仿真</div>
<div class="lbl" style="left:1149px;top:163px;color:#5a5a5a;-webkit-text-stroke:0">设置</div>
<div class="lbl" style="left:1184px;top:163px;color:#5a5a5a;-webkit-text-stroke:0">外部工具</div>
<div class="lbl" style="left:1242px;top:163px;color:#5a5a5a;-webkit-text-stroke:0">关于</div>

<div class="btn" style="left:888px;top:187px;width:73px;height:28px">粘贴新模型</div>
<div class="btn" style="left:969px;top:187px;width:73px;height:28px">计算毛坯</div>
<div class="btn" style="left:1050px;top:187px;width:73px;height:28px">毛坯编辑</div>
<div class="btn" style="left:1131px;top:187px;width:73px;height:28px">星河刀具库</div>
<div class="btn" style="left:1212px;top:187px;width:73px;height:28px">重排列刀路</div>
<div class="btn" style="left:1293px;top:187px;width:73px;height:28px">删除全部模型</div>
<div class="lbl" style="left:1369px;top:194px;color:#c848dc;font-family:'Liberation Serif',serif;font-size:11px;transform:scaleX(0.85);transform-origin:0 0;-webkit-text-stroke:0.15px #c848dc">YES</div>
<div class="a" style="left:1398px;top:192px;width:18px;height:18px;border-radius:50%;background:#12e012;border:1px solid #1a3a1a"></div>

<div class="btn" style="left:887px;top:224px;width:73px;height:28px">删除已选</div>
<div class="btn" style="left:968px;top:224px;width:73px;height:28px">坐标列表</div>
<div class="btn" style="left:1049px;top:224px;width:73px;height:28px">刀路列表</div>
<div class="btn" style="left:1130px;top:224px;width:73px;height:28px">模型列表</div>
<div class="btn" style="left:1212px;top:224px;width:73px;height:28px">刀具列表</div>
<div class="btn" style="left:1293px;top:224px;width:73px;height:28px">驱动列表</div>
<div class="lbl" style="left:1369px;top:230px;color:#d440e4;font-size:11.2px;-webkit-text-stroke:0.1px #d440e4">连接成功</div>

<!-- tabs -->
<div class="a" style="left:944px;top:270px;width:254px;height:16px;background:#f0f0f0;border:1px solid #dadada;border-bottom:none"></div>
<div class="a" style="left:998px;top:271px;width:1px;height:16px;background:#dadada"></div>
<div class="a" style="left:1054px;top:271px;width:1px;height:16px;background:#dadada"></div>
<div class="a" style="left:1110px;top:271px;width:1px;height:16px;background:#dadada"></div>
<div class="a" style="left:1155px;top:271px;width:1px;height:16px;background:#dadada"></div>
<div class="a" style="left:885px;top:286px;width:377px;height:431px;background:#fff;border:1px solid #dadada"></div>
<div class="a" style="left:885px;top:268px;width:60px;height:19px;background:#fff;border:1px solid #dadada;border-bottom:none"></div>
<div class="lbl" style="left:892px;top:270px;font-size:11.2px;-webkit-text-stroke:0.1px">三轴联动</div>
<div class="lbl" style="left:948px;top:272px;font-size:11.2px;-webkit-text-stroke:0.1px">四轴联动</div>
<div class="lbl" style="left:1004px;top:272px;font-size:11.2px;-webkit-text-stroke:0.1px">摆头联动</div>
<div class="lbl" style="left:1060px;top:272px;font-size:11.2px;-webkit-text-stroke:0.1px">平行加工</div>
<div class="lbl" style="left:1116px;top:272px;font-size:11.2px;-webkit-text-stroke:0.1px">切割锯</div>
<div class="lbl" style="left:1160px;top:272px;font-size:11.2px;-webkit-text-stroke:0.1px">帮助</div>

<!-- form -->
<div class="lbl" style="left:899px;top:308px">刀路名称</div>
<div class="btn" style="left:1147px;top:306px;width:82px;height:26px">重排列刀路</div>
<div class="btn" style="left:1147px;top:343px;width:82px;height:26px">刷新</div>
<div class="tb" style="left:962px;top:300px;width:105px;height:30px">888888</div>
<div class="lbl" style="left:899px;top:339px">基于坐标</div>
<div class="cmb" style="left:962px;top:339px;width:105px;height:18px"></div>
<svg style="left:1055px;top:345px" width="10" height="6"><path d="M0.5 0.5 L4.5 4.5 L8.5 0.5" fill="none" stroke="#444" stroke-width="1.1"/></svg>
<div class="lbl" style="left:898px;top:369px">使用刀具</div>
<div class="cmb" style="left:962px;top:368px;width:105px;height:18px"></div>
<svg style="left:1055px;top:374px" width="10" height="6"><path d="M0.5 0.5 L4.5 4.5 L8.5 0.5" fill="none" stroke="#444" stroke-width="1.1"/></svg>

<div class="lbl" style="left:898px;top:399px">加工方式</div>
<div class="cb" style="left:962px;top:401px"></div>
<svg style="left:962px;top:401px" width="13" height="13"><path d="M2 6.5 L4.8 9.3 L10.8 2.6" fill="none" stroke="#333" stroke-width="1.2"/></svg>
<div class="lbl" style="left:976px;top:400px">圆形</div>
<div class="cb" style="left:1022px;top:401px"></div>
<div class="lbl" style="left:1038px;top:400px">直线</div>

<div class="lbl" style="left:898px;top:434px">角度范围</div>
<div class="tb" style="left:962px;top:426px;width:54px;height:30px">0</div>
<div class="tb" style="left:1023px;top:426px;width:53px;height:30px">360</div>
<div class="cb" style="left:1091px;top:434px"></div>
<svg style="left:1091px;top:434px" width="13" height="13"><path d="M2 6.5 L4.8 9.3 L10.8 2.6" fill="none" stroke="#333" stroke-width="1.2"/></svg>
<div class="lbl" style="left:1105px;top:434px">双向</div>
<div class="cb" style="left:1142px;top:434px"></div>
<div class="lbl" style="left:1156px;top:434px">顺铣</div>
<div class="cb" style="left:1187px;top:434px"></div>
<div class="lbl" style="left:1201px;top:434px">逆铣</div>

<div class="lbl" style="left:899px;top:473px">工件残留</div>
<div class="tb" style="left:962px;top:465px;width:105px;height:31px">0</div>
<div class="lbl" style="left:898px;top:513px">加工行距</div>
<div class="tb" style="left:962px;top:506px;width:105px;height:30px">0. 4</div>
<div class="lbl" style="left:900px;top:553px">加工精度</div>
<div class="tb" style="left:962px;top:545px;width:105px;height:30px">0. 2</div>

<div class="cb" style="left:901px;top:593px"></div>
<svg style="left:901px;top:593px" width="13" height="13"><path d="M2 6.5 L4.8 9.3 L10.8 2.6" fill="none" stroke="#333" stroke-width="1.2"/></svg>
<div class="lbl" style="left:915px;top:592px">自动长度</div>
<div class="lbl" style="left:976px;top:592px">刀路开始点</div>
<div class="tb" style="left:1040px;top:585px;width:67px;height:30px;border-color:#b9b9b9"></div>
<div class="lbl" style="left:1115px;top:591px">刀路结束点</div>
<div class="tb" style="left:1179px;top:584px;width:67px;height:30px;border-color:#b9b9b9;padding-bottom:3px">–</div>

<div class="cb" style="left:900px;top:620px"></div>
<svg style="left:900px;top:620px" width="13" height="13"><path d="M2 6.5 L4.8 9.3 L10.8 2.6" fill="none" stroke="#333" stroke-width="1.2"/></svg>
<div class="lbl" style="left:915px;top:620px">碰撞检测</div>
<div class="cb" style="left:900px;top:646px"></div>
<div class="lbl" style="left:915px;top:646px">碰撞避让</div>
<div class="btn" style="left:1019px;top:631px;width:103px;height:50px">执行</div>

<!-- right side -->
<div class="btn" style="left:1326px;top:266px;width:40px;height:35px">上视图</div>
<div class="btn" style="left:1272px;top:314px;width:40px;height:36px">左视图</div>
<div class="btn" style="left:1326px;top:314px;width:40px;height:36px">前视图</div>
<div class="btn" style="left:1378px;top:314px;width:40px;height:36px">右视图</div>
<div class="btn" style="left:1326px;top:362px;width:40px;height:35px">下视图</div>
<div class="lbl" style="left:1272px;top:412px">当前激活刀路：</div>
<div class="btn" style="left:1272px;top:438px;width:73px;height:31px">激活上一刀路</div>
<div class="btn" style="left:1354px;top:438px;width:73px;height:31px">激活下一刀路</div>
<div class="btn" style="left:1271px;top:480px;width:157px;height:43px">设置当前激活路径</div>
<div class="lbl" style="left:1276px;top:550px">主轴转速</div>
<div class="tb" style="left:1337px;top:541px;width:75px;height:33px">1500</div>
<div class="lbl" style="left:1276px;top:595px">切削速度</div>
<div class="tb" style="left:1337px;top:586px;width:75px;height:33px">1000</div>
<div class="lbl" style="left:1276px;top:641px">掠过进给率</div>
<div class="tb" style="left:1337px;top:632px;width:75px;height:33px">3000</div>
<div class="lbl" style="left:1276px;top:686px">下刀速度</div>
<div class="tb" style="left:1337px;top:677px;width:75px;height:33px">500</div>

</body></html>
